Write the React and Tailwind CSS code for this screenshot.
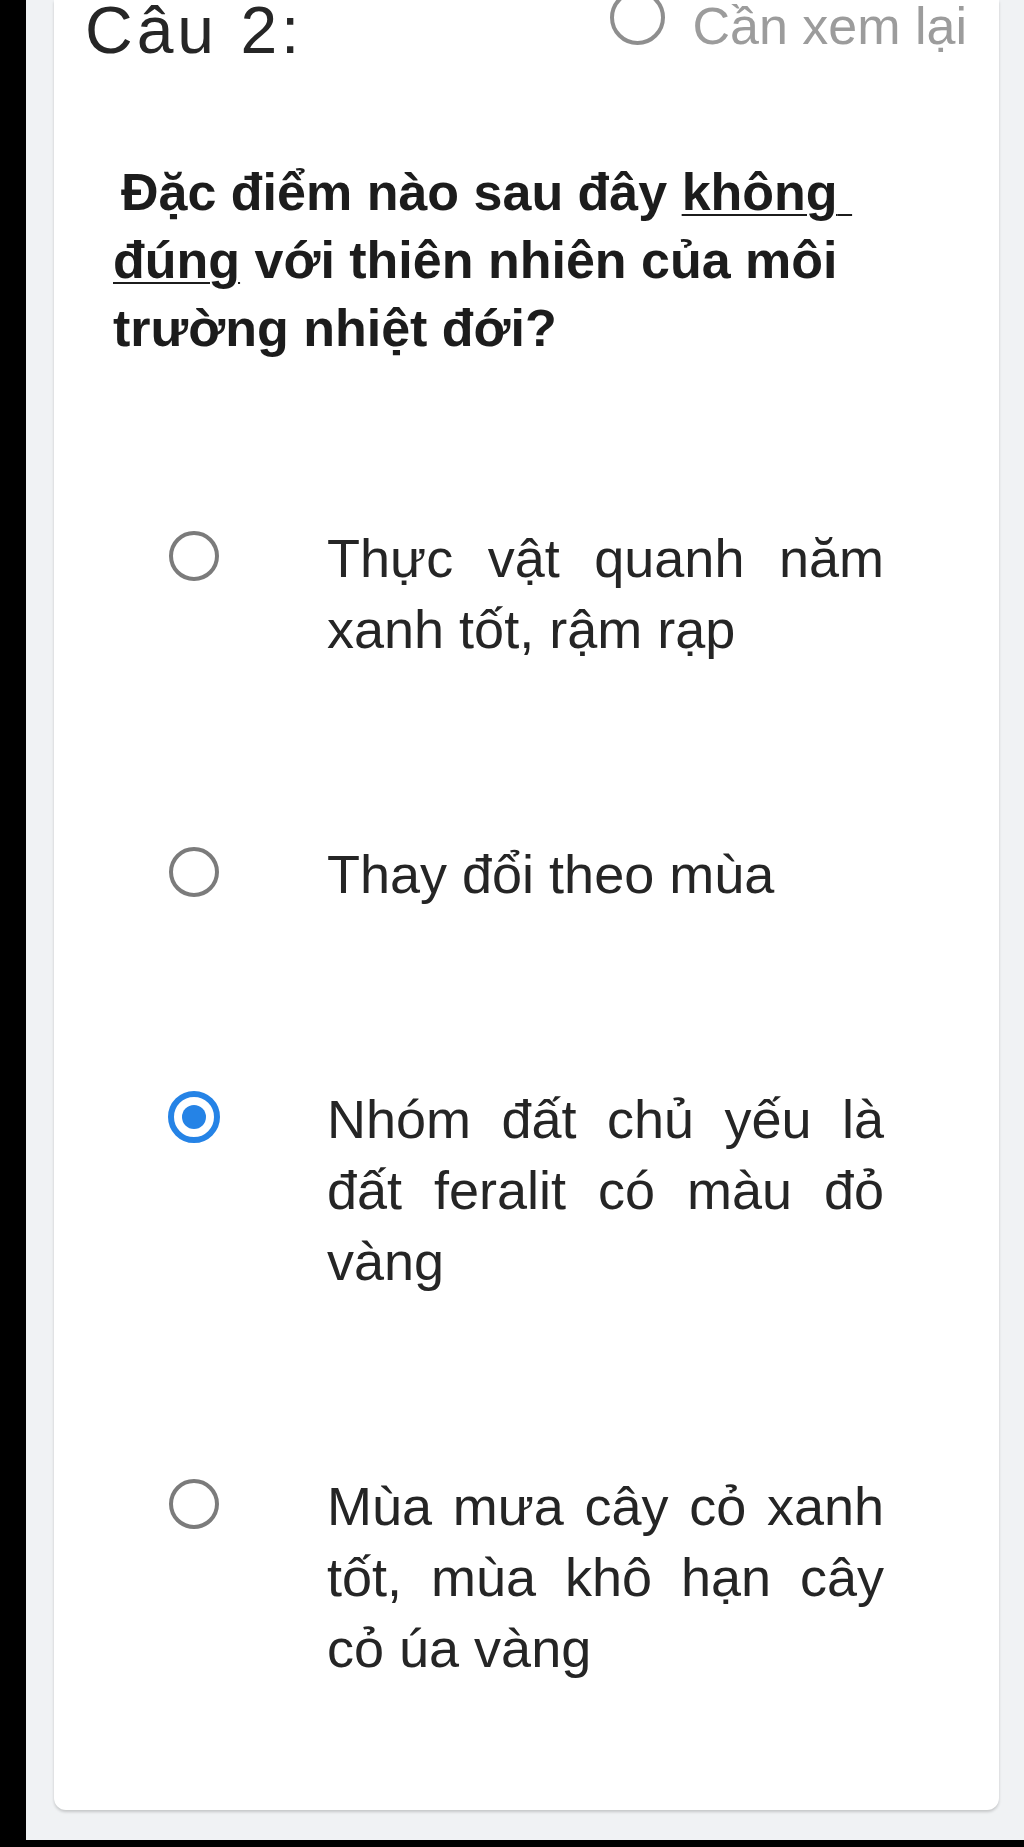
import React from 'react';

const sans = { fontFamily: '"Liberation Sans", Arial, sans-serif' };

function Radio({ checked }) {
  if (checked) {
    return (
      <div className="flex h-[52px] w-[52px] items-center justify-center rounded-full border-[6px] border-[#2583e6]">
        <div className="h-[24px] w-[24px] rounded-full bg-[#2583e6]" />
      </div>
    );
  }
  return <div className="h-[50px] w-[50px] rounded-full border-[4px] border-[#7b7b7b]" />;
}

function Option({ text, checked, first }) {
  return (
    <div className={`flex items-start pl-[114px] ${first ? '' : 'mt-[174px]'}`}>
      <div className="flex h-[71px] w-[52px] items-center justify-center">
        <div className="mb-[6px]">
          <Radio checked={checked} />
        </div>
      </div>
      <p className="ml-[107px] w-[557px] text-justify text-[54px] leading-[71px] text-[#252525]">{text}</p>
    </div>
  );
}

const options = [
  { text: 'Thực vật quanh năm xanh tốt, rậm rạp' },
  { text: 'Thay đổi theo mùa' },
  { text: 'Nhóm đất chủ yếu là đất feralit có màu đỏ vàng', checked: true },
  { text: 'Mùa mưa cây cỏ xanh tốt, mùa khô hạn cây cỏ úa vàng' },
];

export default function App() {
  return (
    <div className="flex h-[1847px] w-[1024px] flex-col bg-black" style={sans}>
      <div className="ml-[26px] flex-1 bg-[#f0f2f4] pb-[30px] pl-[28px] pr-[25px]">
        <div className="h-[1810px] rounded-b-[12px] bg-white shadow-[0_2px_3px_rgba(0,0,0,0.18)]">
          {/* header */}
          <div className="flex items-start justify-between pl-[31px] pr-[32px]">
            <h2 className="text-[66px] leading-[60px] tracking-[4px] text-[#262626]">Câu 2:</h2>
            <div className="flex items-start">
              <div className="mt-[-10px] h-[55px] w-[55px] rounded-full border-[4px] border-[#8e8e8e]" />
              <span className="ml-[27px] text-[52px] leading-[52px] text-[#9c9c9c]">Cần xem lại</span>
            </div>
          </div>

          {/* question */}
          <p className="mt-[98px] pl-[59px] pr-[115px] indent-[8px] text-[52px] font-bold leading-[68px] text-[#1c1c1c]">
            Đặc điểm nào sau đây <u className="decoration-[2px] underline-offset-[4px]">không{'\u00a0\u200b'}</u>
            <u className="decoration-[2px] underline-offset-[4px]">đúng</u> với thiên nhiên của môi trường nhiệt đới?
          </p>

          {/* answers */}
          <div className="mt-[161px]">
            {options.map((o, i) => (
              <Option key={i} text={o.text} checked={o.checked} first={i === 0} />
            ))}
          </div>
        </div>
      </div>
      <div className="h-[7px]" />
    </div>
  );
}
